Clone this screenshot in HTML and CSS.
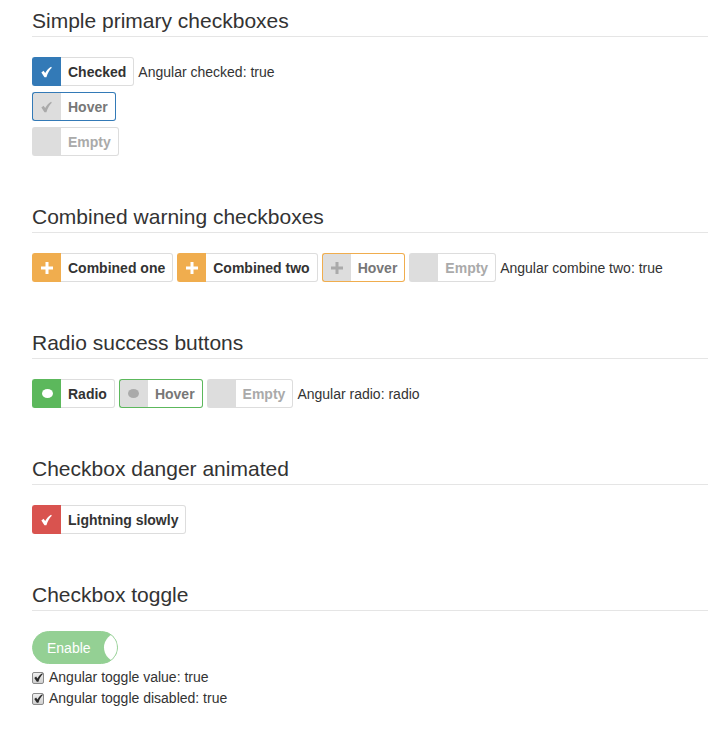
FILE: index.html
```html
<!DOCTYPE html>
<html lang="en">
<head>
  <meta charset="UTF-8" />
  <meta name="viewport" content="width=device-width, initial-scale=1.0"/>
  <title>Checkbox demos</title>
  <link rel="stylesheet" href="styles.css">
</head>
<body>
  <div class="page">

    <!-- Primary -->
    <section class="demo">
      <h3 class="demo-title">Simple primary checkboxes</h3>
      <div class="demo-rows">
        <div class="demo-row">
          <span class="cbx cbx-primary is-checked">
            <span class="cbx-icon"><svg class="ico-check" viewBox="0 0 12 12"><path d="M.4 6.6l2.4-1.9 1.8 2.5C6.1 4.4 8.1 2 11 .3l.8 1C9.3 3.6 7.3 7 5.9 11.6H3.8z"/></svg></span>
            <span class="cbx-label">Checked</span>
          </span>
          <span class="note">Angular checked: true</span>
        </div>
        <div class="demo-row">
          <span class="cbx cbx-primary is-hover">
            <span class="cbx-icon"><svg class="ico-check" viewBox="0 0 12 12"><path d="M.4 6.6l2.4-1.9 1.8 2.5C6.1 4.4 8.1 2 11 .3l.8 1C9.3 3.6 7.3 7 5.9 11.6H3.8z"/></svg></span>
            <span class="cbx-label">Hover</span>
          </span>
        </div>
        <div class="demo-row">
          <span class="cbx is-empty">
            <span class="cbx-icon"></span>
            <span class="cbx-label">Empty</span>
          </span>
        </div>
      </div>
    </section>

    <!-- Warning -->
    <section class="demo">
      <h3 class="demo-title">Combined warning checkboxes</h3>
      <div class="demo-rows">
        <div class="demo-row">
          <span class="cbx cbx-warning is-checked">
            <span class="cbx-icon"><svg class="ico-plus" viewBox="0 0 12 12"><path d="M4.5 0h3v4.5H12v3H7.5V12h-3V7.5H0v-3h4.5z"/></svg></span>
            <span class="cbx-label">Combined one</span>
          </span>
          <span class="cbx cbx-warning is-checked">
            <span class="cbx-icon"><svg class="ico-plus" viewBox="0 0 12 12"><path d="M4.5 0h3v4.5H12v3H7.5V12h-3V7.5H0v-3h4.5z"/></svg></span>
            <span class="cbx-label">Combined two</span>
          </span>
          <span class="cbx cbx-warning is-hover">
            <span class="cbx-icon"><svg class="ico-plus" viewBox="0 0 12 12"><path d="M4.5 0h3v4.5H12v3H7.5V12h-3V7.5H0v-3h4.5z"/></svg></span>
            <span class="cbx-label">Hover</span>
          </span>
          <span class="cbx is-empty">
            <span class="cbx-icon"></span>
            <span class="cbx-label">Empty</span>
          </span>
          <span class="note">Angular combine two: true</span>
        </div>
      </div>
    </section>

    <!-- Success radios -->
    <section class="demo">
      <h3 class="demo-title">Radio success buttons</h3>
      <div class="demo-rows">
        <div class="demo-row">
          <span class="cbx cbx-success is-checked">
            <span class="cbx-icon"><span class="dot"></span></span>
            <span class="cbx-label">Radio</span>
          </span>
          <span class="cbx cbx-success is-hover">
            <span class="cbx-icon"><span class="dot"></span></span>
            <span class="cbx-label">Hover</span>
          </span>
          <span class="cbx is-empty">
            <span class="cbx-icon"></span>
            <span class="cbx-label">Empty</span>
          </span>
          <span class="note">Angular radio: radio</span>
        </div>
      </div>
    </section>

    <!-- Danger -->
    <section class="demo">
      <h3 class="demo-title">Checkbox danger animated</h3>
      <div class="demo-rows">
        <div class="demo-row">
          <span class="cbx cbx-danger is-checked">
            <span class="cbx-icon"><svg class="ico-check" viewBox="0 0 12 12"><path d="M.4 6.6l2.4-1.9 1.8 2.5C6.1 4.4 8.1 2 11 .3l.8 1C9.3 3.6 7.3 7 5.9 11.6H3.8z"/></svg></span>
            <span class="cbx-label">Lightning slowly</span>
          </span>
        </div>
      </div>
    </section>

    <!-- Toggle -->
    <section class="demo">
      <h3 class="demo-title">Checkbox toggle</h3>
      <div class="toggle">
        Enable
        <span class="toggle-knob"></span>
      </div>
      <div class="toggle-notes">
        <div class="toggle-note">
          <span class="fake-check"><svg viewBox="0 0 12 12"><path d="M.4 6.6l2.4-1.9 1.8 2.5C6.1 4.4 8.1 2 11 .3l.8 1C9.3 3.6 7.3 7 5.9 11.6H3.8z"/></svg></span>
          Angular toggle value: true
        </div>
        <div class="toggle-note">
          <span class="fake-check"><svg viewBox="0 0 12 12"><path d="M.4 6.6l2.4-1.9 1.8 2.5C6.1 4.4 8.1 2 11 .3l.8 1C9.3 3.6 7.3 7 5.9 11.6H3.8z"/></svg></span>
          Angular toggle disabled: true
        </div>
      </div>
    </section>

  </div>
</body>
</html>
```

FILE: styles.css
```css
body {
  margin: 0;
  font-family: "Liberation Sans", Arial, sans-serif;
  font-size: 14px;
  color: #333;
  background: #fff;
}
.page {
  padding: 9px 0 0 32px;
}
.demo {
  margin-bottom: 49px;
}
.demo-title {
  margin: 0 0 20px;
  padding-bottom: 4px;
  font-size: 21px;
  font-weight: normal;
  line-height: 23px;
  color: #333;
  border-bottom: 1px solid #e5e5e5;
}
.demo-rows {
  display: flex;
  flex-direction: column;
  align-items: flex-start;
  gap: 6px;
}
.demo-row {
  display: flex;
  align-items: center;
  gap: 4px;
}

/* checkbox look */
.cbx {
  display: flex;
  height: 29px;
}
.cbx-icon {
  width: 28px;
  display: flex;
  align-items: center;
  justify-content: center;
  background: #ddd;
  border: 1px solid #ddd;
  border-right: 0;
  border-radius: 3px 0 0 3px;
}
.cbx-label {
  display: flex;
  align-items: center;
  padding: 0 7px;
  font-weight: bold;
  color: #333;
  border: 1px solid #ddd;
  border-left: 0;
  border-radius: 0 3px 3px 0;
}
.ico-check {
  width: 11px;
  height: 12px;
  margin-right: 2px;
  fill: #fff;
}
.ico-plus {
  width: 12px;
  height: 12px;
  fill: #fff;
}
.dot {
  width: 11px;
  height: 9px;
  border-radius: 50%;
  background: #fff;
}
.is-hover .cbx-label {
  color: #777;
}
.is-hover .ico-check,
.is-hover .ico-plus {
  fill: #aaa;
}
.is-hover .dot {
  background: #aaa;
}
.is-empty .cbx-label {
  color: #aaa;
}

/* colours */
.cbx-primary.is-checked .cbx-icon { background: #337ab7; border-color: #337ab7; }
.cbx-primary.is-hover .cbx-icon,
.cbx-primary.is-hover .cbx-label { border-color: #337ab7; }

.cbx-warning.is-checked .cbx-icon { background: #f0ad4e; border-color: #f0ad4e; }
.cbx-warning.is-hover .cbx-icon,
.cbx-warning.is-hover .cbx-label { border-color: #f0ad4e; }

.cbx-success.is-checked .cbx-icon { background: #5cb85c; border-color: #5cb85c; }
.cbx-success.is-hover .cbx-icon,
.cbx-success.is-hover .cbx-label { border-color: #5cb85c; }

.cbx-danger.is-checked .cbx-icon { background: #d9534f; border-color: #d9534f; }

.note {
  color: #333;
}

/* toggle */
.toggle {
  position: relative;
  display: flex;
  align-items: center;
  box-sizing: border-box;
  width: 86px;
  height: 33px;
  padding-left: 14px;
  color: #fff;
  background: #5cb85c;
  border: 1px solid #5cb85c;
  border-radius: 17px;
  opacity: .65;
  overflow: hidden;
}
.toggle-knob {
  position: absolute;
  top: 1px;
  left: 71px;
  width: 29px;
  height: 29px;
  border-radius: 50%;
  background: #fff;
}
.toggle-notes {
  margin-top: 3px;
}
.toggle-note {
  display: flex;
  align-items: center;
  line-height: 21px;
}
.fake-check {
  display: flex;
  align-items: center;
  justify-content: center;
  box-sizing: border-box;
  width: 12px;
  height: 12px;
  margin-right: 5px;
  border: 1px solid #8a8a8a;
  border-radius: 2px;
  background: linear-gradient(#f0f0f0, #cfcfcf);
}
.fake-check svg {
  width: 9px;
  height: 9px;
  fill: #2b2b2b;
}
```
